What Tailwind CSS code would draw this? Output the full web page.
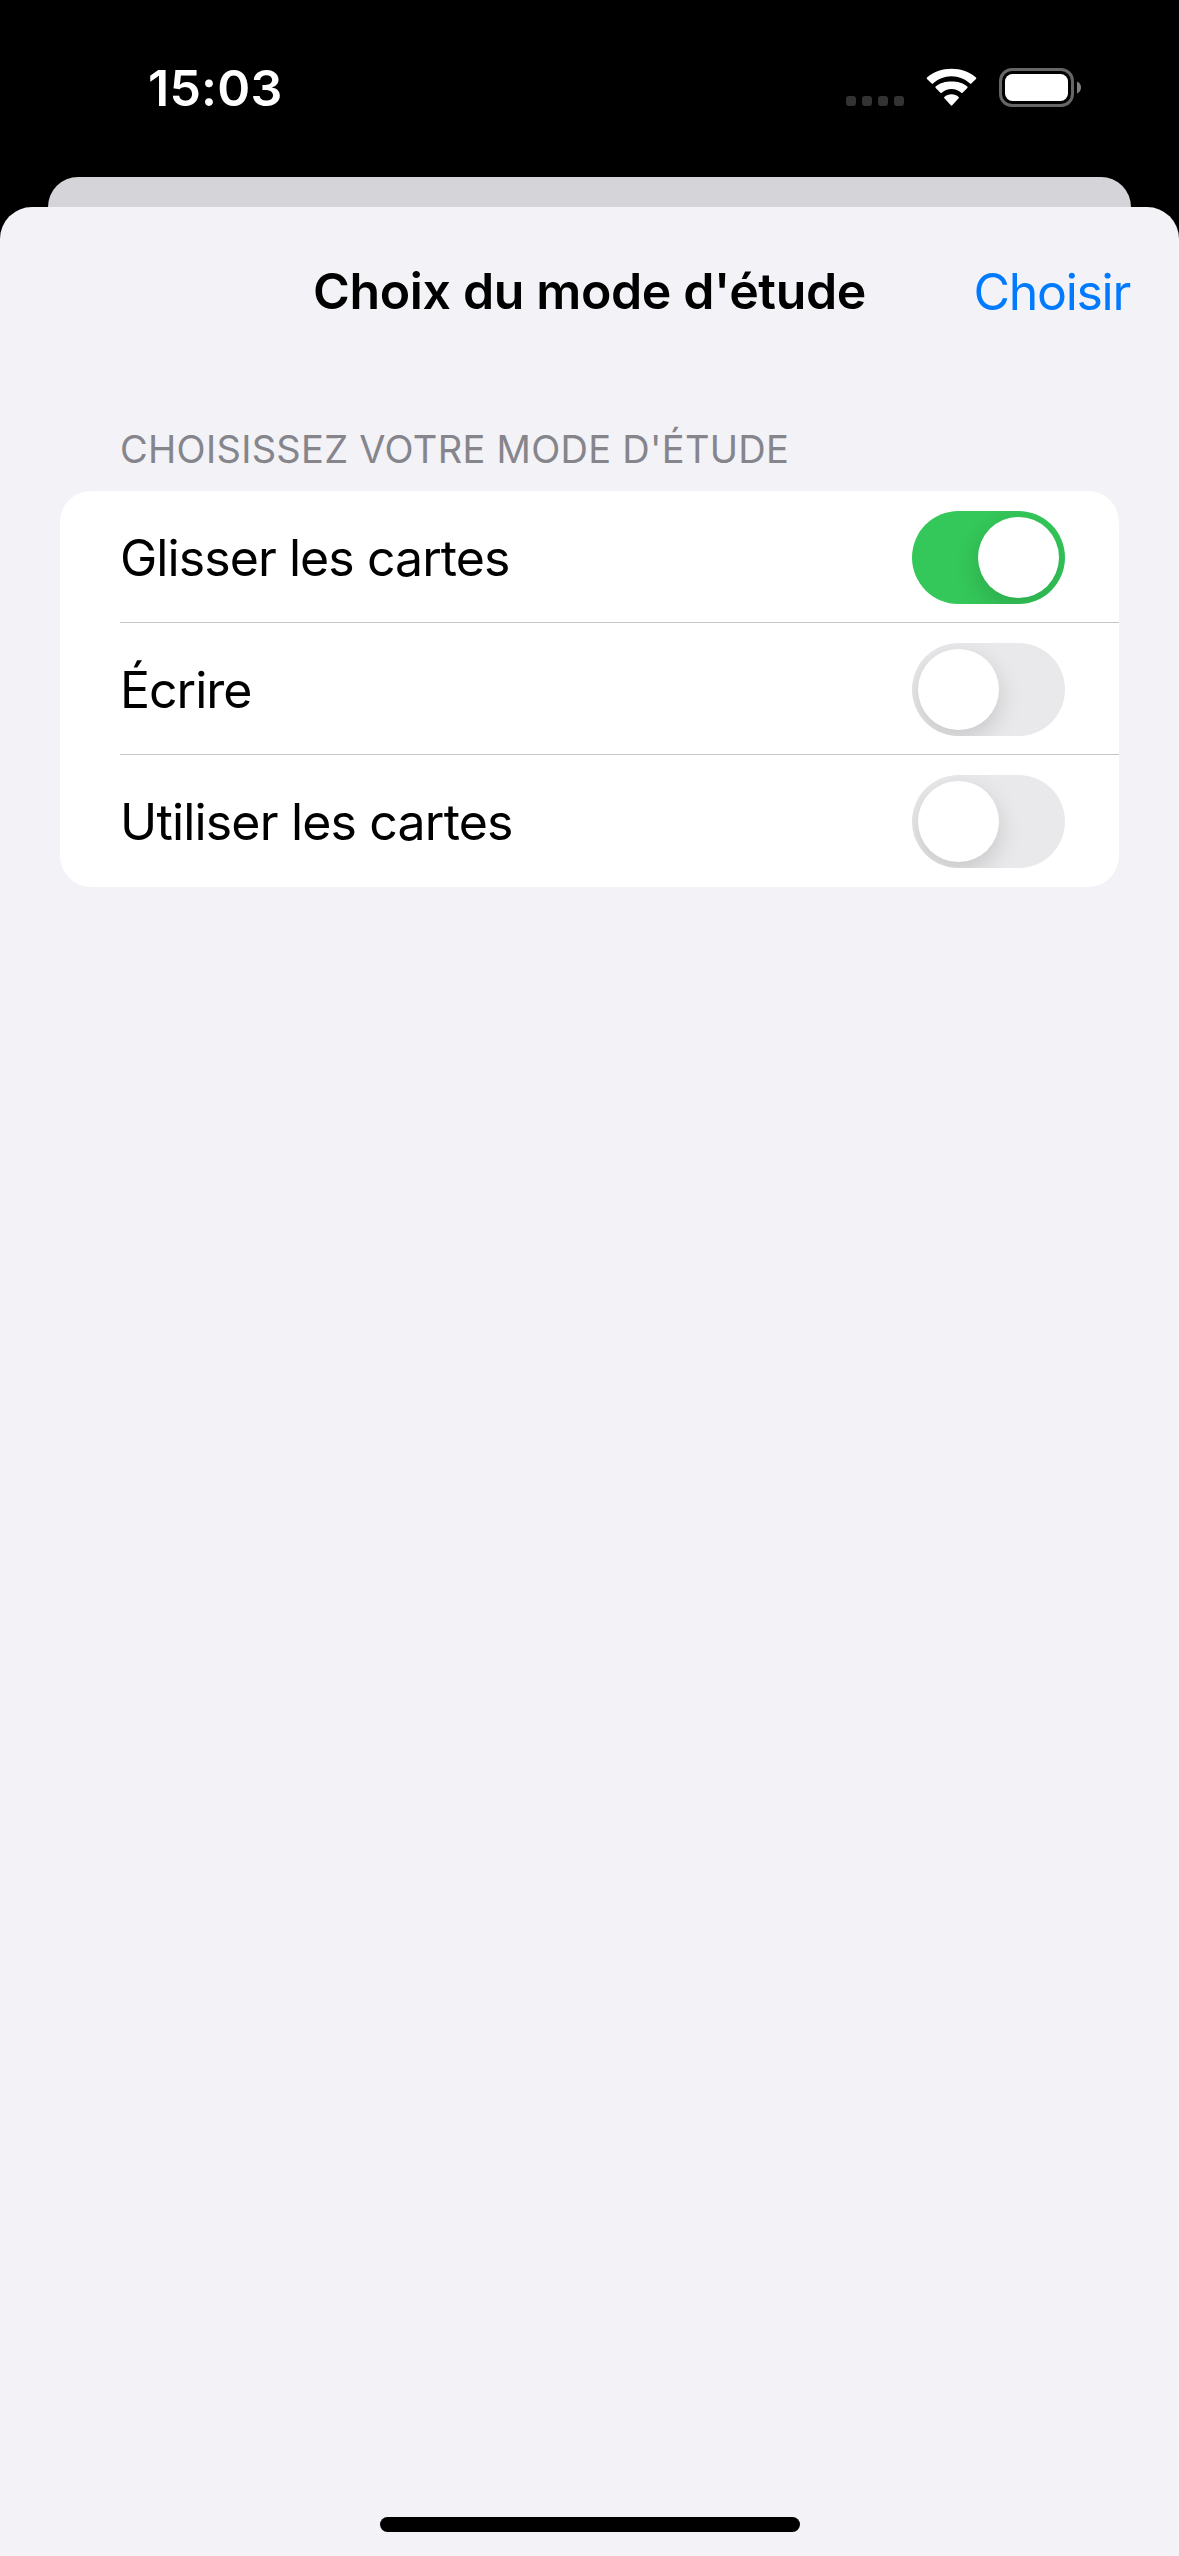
<!DOCTYPE html>
<html lang="fr">
<head>
<meta charset="utf-8">
<title>Choix du mode d'étude</title>
<script src="https://cdn.jsdelivr.net/npm/@tailwindcss/browser@4"></script>
</head>
<body class="bg-black">
<div class="relative flex h-[2556px] w-[1179px] flex-col overflow-hidden bg-black font-['Inter',sans-serif] text-[50px] text-black">
  <header class="flex h-[177px] shrink-0 items-start justify-between pl-[148px] pr-[97px] text-white">
    <span class="mt-[58px] whitespace-nowrap text-[50px] font-semibold leading-[60px] tracking-[0.25px]">15:03</span>
    <div class="mt-[68px] flex">
      <div class="mt-[28px] flex gap-[6px]">
        <i class="size-[10px] rounded-[3px] bg-[#333]"></i>
        <i class="size-[10px] rounded-[3px] bg-[#333]"></i>
        <i class="size-[10px] rounded-[3px] bg-[#333]"></i>
        <i class="size-[10px] rounded-[3px] bg-[#333]"></i>
      </div>
      <svg class="ml-[22px] h-[39px] w-[51px]" viewBox="0 0 51 39" fill="#fff">
        <path d="M25.5 8.2C32.700 8.200 39.200 11 44 15.600Q44.700 16.200 45.300 15.600L50 10.900Q50.700 10.200 50 9.500C43.600 3.900 35 .8 25.500.8S7.400 3.900 1 9.500Q.3 10.200 1 10.900L5.700 15.600Q6.300 16.200 7 15.600C11.800 11 18.300 8.200 25.500 8.200Z"/>
        <path d="M25.500 21C29.300 21 32.700 22.400 35.300 24.700Q36 25.300 36.600 24.700L41.300 20Q42 19.300 41.300 18.600C37.100 14.700 31.600 13.400 25.500 13.400S13.900 14.700 9.700 18.600Q9 19.300 9.700 20L14.400 24.700Q15 25.300 15.700 24.700C18.300 22.400 21.700 21 25.500 21Z"/>
        <path d="M18.300 28.900Q17.700 29.500 18.400 30.200L24.800 37.300Q25.500 38 26.200 37.300L32.600 30.200Q33.300 29.500 32.700 28.900C30.700 27.200 28.200 26.300 25.500 26.300S20.300 27.200 18.300 28.900Z"/>
      </svg>
      <svg class="ml-[22px] h-[39px] w-[83px]" viewBox="0 0 83 39">
        <rect x="1.500" y="1.500" width="72" height="36" rx="11.500" fill="none" stroke="#666" stroke-width="3"/>
        <rect x="6" y="6" width="63" height="27" rx="7.500" fill="#fff"/>
        <path d="M78 13.500C80.500 14.500 82 16.800 82 19.500S80.500 24.500 78 25.500Z" fill="#808080"/>
      </svg>
    </div>
  </header>

  <div class="mx-[48px] h-[30px] shrink-0 rounded-t-[30px] bg-[#d4d4d9]"></div>

  <main class="flex grow flex-col rounded-t-[32px] bg-[#f2f2f7]">
    <div class="grid h-[168px] grid-cols-[1fr_auto_1fr] items-start px-[49px]">
      <span></span>
      <h1 class="mt-[54px] whitespace-nowrap text-[50px] font-semibold leading-[60px] tracking-[-0.36px]">Choix du mode d'étude</h1>
      <button class="mt-[55px] justify-self-end whitespace-nowrap text-[50px] leading-[60px] tracking-[-1.28px] text-[#007aff]">Choisir</button>
    </div>
    <section class="mx-[60px] mt-[51px]">
      <h2 class="h-[65px] whitespace-nowrap pl-[60px] text-[38px] leading-[46px] tracking-[0.3px] text-[#85858b]">CHOISISSEZ VOTRE MODE D'ÉTUDE</h2>
      <ul class="h-[396px] rounded-[31px] bg-white pl-[60px] text-[50px] leading-[60px]">
        <li class="flex h-[132px] items-start justify-between border-b border-[#c6c6c8] pr-[54px]">
          <span class="mt-[37px] tracking-[-0.93px]">Glisser les cartes</span>
          <span class="mt-[20px] flex h-[93px] w-[153px] justify-end overflow-hidden rounded-full bg-[#34c759] p-[6px]"><i class="size-[81px] rounded-full bg-white shadow-[0_9px_24px_rgba(0,0,0,0.15)]"></i></span>
        </li>
        <li class="flex h-[132px] items-start justify-between border-b border-[#c6c6c8] pr-[54px]">
          <span class="mt-[37px] tracking-[-1px]">Écrire</span>
          <span class="mt-[20px] flex h-[93px] w-[153px] overflow-hidden rounded-full bg-[#e9e9eb] p-[6px]"><i class="size-[81px] rounded-full bg-white shadow-[0_9px_24px_rgba(0,0,0,0.15)]"></i></span>
        </li>
        <li class="flex h-[132px] items-start justify-between pr-[54px]">
          <span class="mt-[37px] tracking-[-0.82px]">Utiliser les cartes</span>
          <span class="mt-[20px] flex h-[93px] w-[153px] overflow-hidden rounded-full bg-[#e9e9eb] p-[6px]"><i class="size-[81px] rounded-full bg-white shadow-[0_9px_24px_rgba(0,0,0,0.15)]"></i></span>
        </li>
      </ul>
    </section>
    <div class="mx-auto mt-auto mb-[24px] h-[15px] w-[420px] shrink-0 rounded-full bg-black"></div>
  </main>
</div>
</body>
</html>
